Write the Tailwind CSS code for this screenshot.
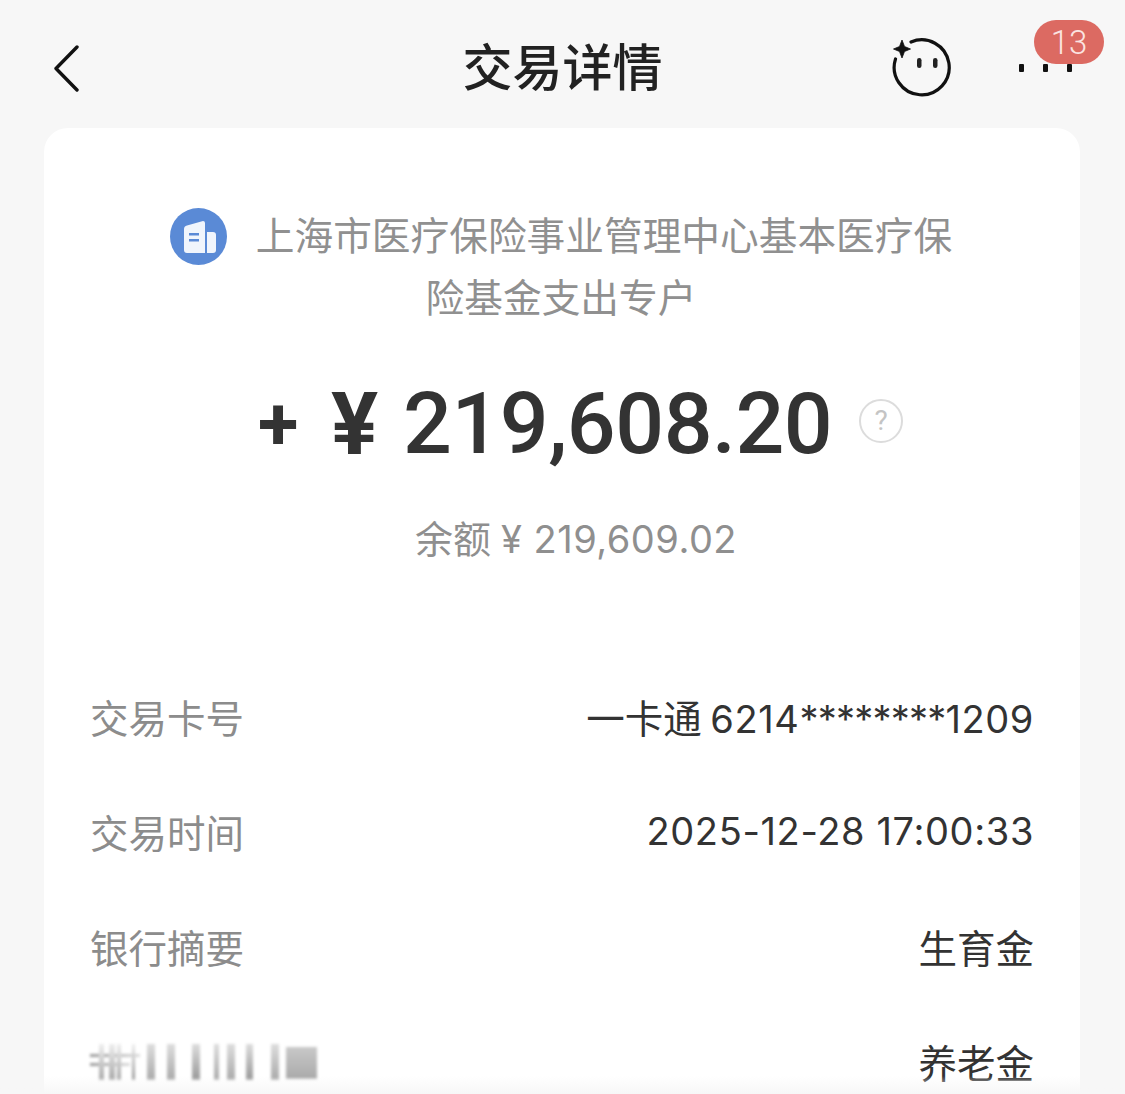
<!DOCTYPE html>
<html lang="zh-CN">
<head>
<meta charset="utf-8">
<script src="https://cdn.jsdelivr.net/npm/@tailwindcss/browser@4"></script>
</head>
<body class="m-0 bg-[#f7f7f7] font-['Noto_Sans_CJK_SC','Noto_Sans',sans-serif]">
<div class="w-[1125px] h-[1094px] overflow-hidden flex flex-col relative">
  <header class="h-[128px] shrink-0 flex items-center justify-between pl-[52px] pr-[21px] relative">
    <svg class="w-[30px] h-[48px] mt-[10px]" viewBox="0 0 30 48" fill="none" stroke="#111" stroke-width="3.4" stroke-linecap="round" stroke-linejoin="round"><path d="M25 2 L4 23.500 L25 45"/></svg>
    <h1 class="absolute left-0 right-0 top-[29px] text-center text-[50px] leading-[70px] font-medium text-[#222] m-0">交易详情</h1>
    <div class="flex items-center">
      <svg class="w-[60px] h-[60px] mt-[6px]" viewBox="0 0 60 60" fill="none">
        <path d="M19 5 A27.500 27.500 0 1 1 3.500 22" stroke="#111" stroke-width="3.200" stroke-linecap="round"/>
        <path d="M10 3 L12.500 9.500 L18.500 12 L12.500 14.500 L10 21 L7.500 14.500 L1.500 12 L7.500 9.500 Z" fill="#111" stroke="#111" stroke-width="0.800" stroke-linejoin="round"/>
        <rect x="25" y="21" width="4.500" height="10" rx="2.200" fill="#222"/>
        <rect x="41" y="21" width="4.500" height="10" rx="2.200" fill="#222"/>
      </svg>
      <div class="relative w-[152px] h-[60px] mt-[6px]">
        <div class="absolute left-[67px] top-[27px] flex gap-[19px]">
          <span class="w-[5px] h-[8px] rounded-[1px] bg-[#111]"></span>
          <span class="w-[5px] h-[8px] rounded-[1px] bg-[#111]"></span>
          <span class="w-[5px] h-[8px] rounded-[1px] bg-[#111]"></span>
        </div>
      </div>
    </div>
    <span class="absolute left-[1034px] top-[20px] w-[70px] h-[44px] rounded-full bg-[#dc6a62] flex items-center justify-center text-[33px] leading-none text-[#fbe4e1] font-['Roboto',sans-serif] font-light">13</span>
  </header>

  <main class="ml-[44px] w-[1036px] flex-1 bg-white rounded-t-[24px] flex flex-col">
    <p class="m-0 mt-[75px] h-[120px] pr-[2px] text-center text-[38.700px] leading-[60px] text-[#909090]">
      <svg class="inline-block align-top w-[57px] h-[57px] mr-[29px] mt-[5px]" viewBox="0 0 57 57">
        <circle cx="28.500" cy="28.500" r="28.500" fill="#5a8ad6"/>
        <path d="M14 21 Q14 18 17 17.500 L33 13 Q35 13 35 15 V45 H17 Q14 45 14 42 Z" fill="#f0f5fc"/>
        <path d="M37 24 H43 Q46 24 46 27 V42 Q46 45 43 45 H37 Z" fill="#f0f5fc"/>
        <rect x="19" y="25" width="10" height="2.500" fill="#5a8ad6"/>
        <rect x="19" y="31" width="10" height="2.500" fill="#5a8ad6"/>
      </svg>上海市医疗保险事业管理中心基本医疗保<br>险基金支出专户
    </p>

    <div class="mt-[54px] h-[94px] pl-[214px] flex items-center text-[#333] font-['Roboto',sans-serif] font-medium">
      <span class="w-[73px] text-[74px] leading-none font-bold">+</span>
      <span class="w-[72px] text-[88px] leading-none font-bold">¥</span>
      <span class="w-[456px] text-[86px] leading-none tracking-[-0.5px]">219,608.20</span>
      <span class="w-[44px] h-[44px] mt-[-6px] rounded-full border-2 border-[#dcdcdc] flex items-center justify-center text-[28px] leading-none text-[#c4c4c4] font-normal">?</span>
    </div>

    <p class="m-0 mt-[39px] h-[54px] text-center text-[38px] leading-[54px] text-[#8f8f8f] pl-[28px]">余额<span class="font-['Inter',sans-serif] ml-[10px] tracking-[0.5px]">¥ 219,609.02</span></p>

    <dl class="m-0 mt-[125px] pl-[46px] pr-[46px] flex flex-col gap-[61px] text-[38.500px] leading-[54px]">
      <div class="flex justify-between h-[54px]">
        <dt class="text-[#8c8c8c]">交易卡号</dt>
        <dd class="m-0 text-[#333]">一卡通 <span class="font-['Inter',sans-serif] text-[38px] tracking-[0.6px]">6214<span class="tracking-[-0.8px]">********</span>1209</span></dd>
      </div>
      <div class="flex justify-between h-[54px]">
        <dt class="text-[#8c8c8c]">交易时间</dt>
        <dd class="m-0 text-[#333] font-['Inter',sans-serif] text-[38px] tracking-[0.63px]">2025-12-28 17:00:33</dd>
      </div>
      <div class="flex justify-between h-[54px]">
        <dt class="text-[#8c8c8c]">银行摘要</dt>
        <dd class="m-0 text-[#333]">生育金</dd>
      </div>
      <div class="flex justify-between h-[54px]">
        <dt class="relative w-[230px]">
          <div class="absolute left-0 top-[10px] w-[230px] h-[36px] blur-[1.500px]">
            <div class="absolute left-0 top-[10px] w-[50px] h-[3px] bg-gradient-to-r from-[#999] to-[#ddd]"></div>
            <div class="absolute left-0 top-[19px] w-[40px] h-[3px] bg-gradient-to-r from-[#999] to-[#ddd]"></div>
            <div class="absolute left-[9px] top-0 flex h-[36px]">
              <span class="w-[5px] bg-gradient-to-b from-[#eee] to-[#aaa]"></span>
              <span class="w-[6px] ml-[5px] bg-gradient-to-b from-[#eee] to-[#aaa]"></span>
              <span class="w-[4px] ml-[2px] bg-gradient-to-b from-[#eee] to-[#aaa]"></span>
              <span class="w-[3px] ml-[11px] bg-gradient-to-b from-[#eee] to-[#999]"></span>
              <span class="w-[8px] ml-[12px] bg-gradient-to-b from-[#ddd] to-[#aaa]"></span>
              <span class="w-[8px] ml-[12px] bg-gradient-to-b from-[#ddd] to-[#aaa]"></span>
              <span class="w-[8px] ml-[17px] bg-gradient-to-b from-[#ddd] to-[#999]"></span>
              <span class="w-[5px] ml-[14px] bg-gradient-to-b from-[#ddd] to-[#aaa]"></span>
              <span class="w-[8px] ml-[8px] bg-gradient-to-b from-[#ddd] to-[#aaa]"></span>
              <span class="w-[7px] ml-[11px] bg-gradient-to-b from-[#ddd] to-[#999]"></span>
              <span class="w-[8px] ml-[18px] bg-gradient-to-b from-[#ddd] to-[#aaa]"></span>
            </div>
            <div class="absolute left-[196px] top-[3px] w-[31px] h-[32px] bg-gradient-to-b from-[#c8c8c8] to-[#aaa]"></div>
          </div>
        </dt>
        <dd class="m-0 text-[#333]">养老金</dd>
      </div>
    </dl>
  </main>
  <div class="absolute left-0 right-0 bottom-0 h-[18px] bg-gradient-to-b from-[#f7f7f7]/0 to-[#f7f7f7]"></div>
</div>
</body>
</html>
